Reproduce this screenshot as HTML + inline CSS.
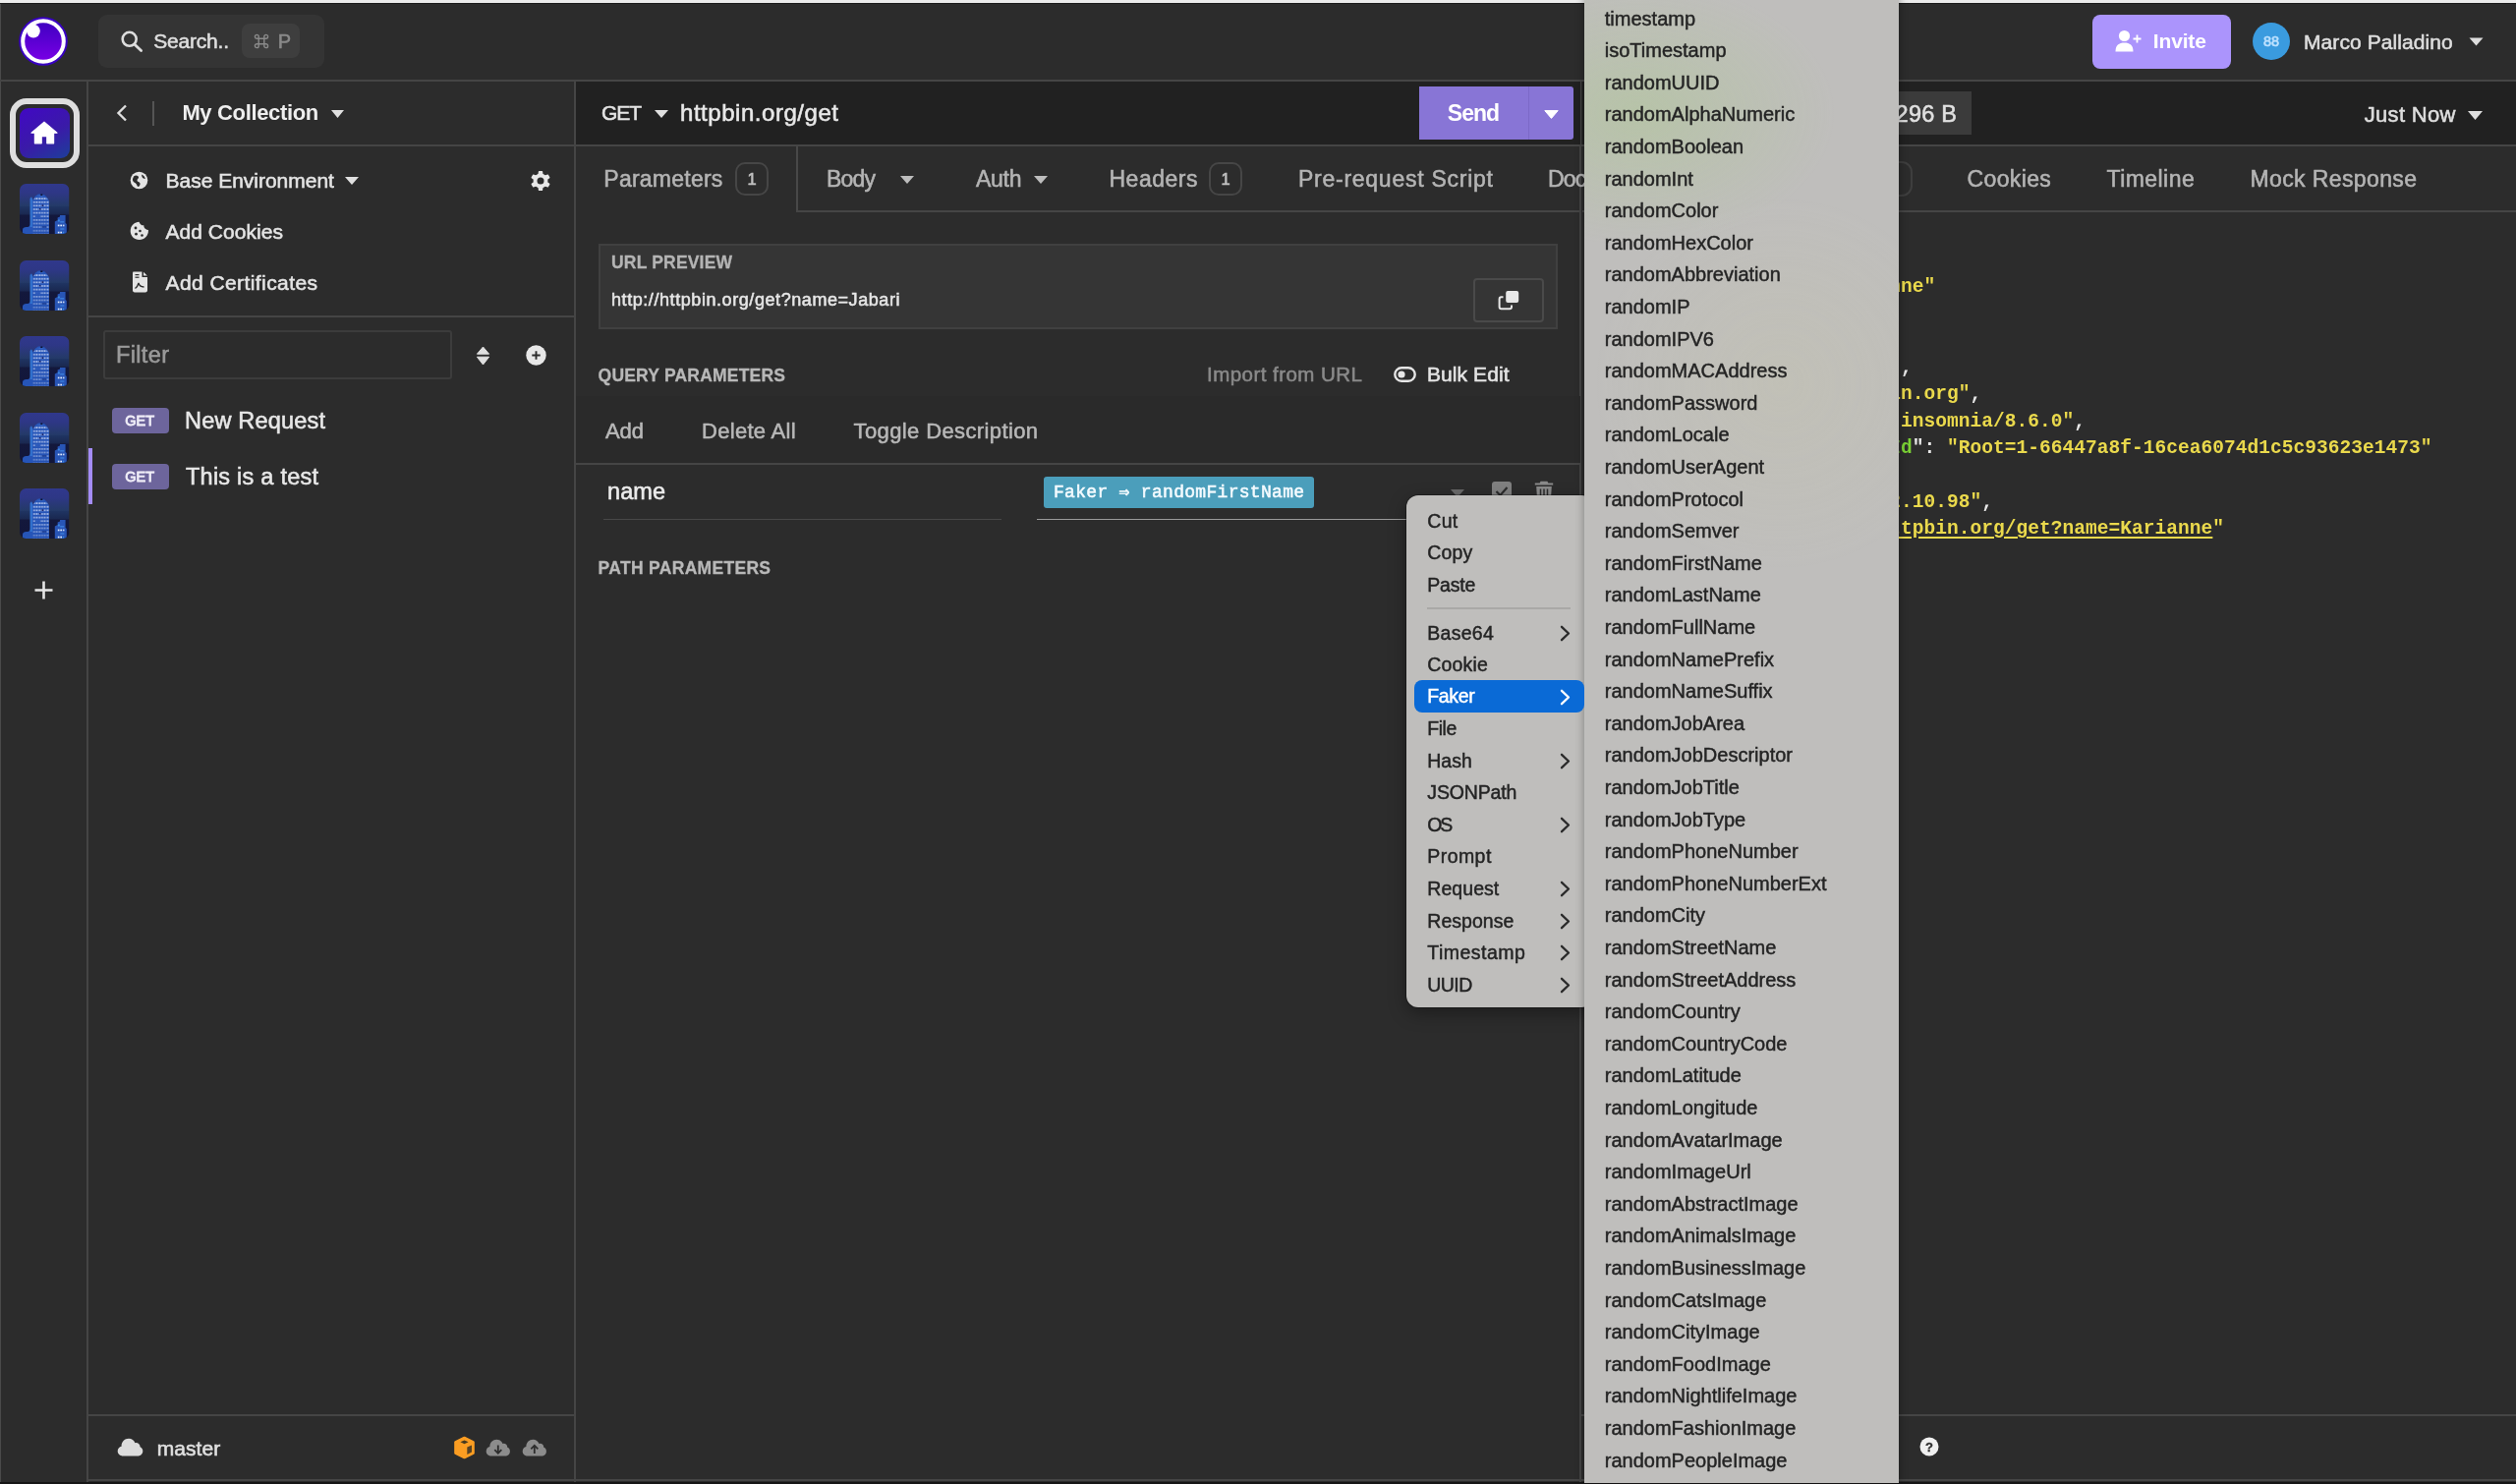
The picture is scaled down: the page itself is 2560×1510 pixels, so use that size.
<!DOCTYPE html>
<html><head><meta charset="utf-8"><title>Insomnia</title>
<style>
html,body{margin:0;padding:0;}
body{width:2560px;height:1510px;overflow:hidden;background:#2c2c2c;position:relative;font-family:'Liberation Sans', sans-serif;}
#w{position:absolute;left:0;top:0;width:2560px;height:1510px;will-change:transform;}
.a{position:absolute;box-sizing:border-box;}
.t{position:absolute;white-space:pre;-webkit-text-stroke:0.55px currentColor;}
.n{-webkit-text-stroke:0;}
.b{-webkit-text-stroke:0.3px currentColor;}
.m{-webkit-text-stroke:0.45px currentColor;}
</style></head><body><div id="w">
<div class="a" style="left:0px;top:0px;width:2560px;height:3px;background:#ececec;"></div>
<div class="a" style="left:0px;top:3px;width:2560px;height:1px;background:#1c1c1c;"></div>
<div class="a" style="left:0px;top:4px;width:1px;height:1506px;background:#4a4a4a;"></div>
<div class="a" style="left:0px;top:1508px;width:2560px;height:2px;background:#161616;"></div>
<div class="a" style="left:0px;top:81px;width:2560px;height:2px;background:#454545;"></div>
<div class="a" style="left:88px;top:82px;width:2px;height:1426px;background:#454545;"></div>
<div class="a" style="left:584px;top:82px;width:2px;height:1426px;background:#454545;"></div>
<div class="a" style="left:1607px;top:82px;width:2px;height:1426px;background:#454545;"></div>
<div class="a" style="left:89px;top:147px;width:495px;height:2px;background:#454545;"></div>
<div class="a" style="left:89px;top:321px;width:495px;height:2px;background:#454545;"></div>
<div class="a" style="left:89px;top:1439px;width:495px;height:2px;background:#454545;"></div>
<div class="a" style="left:89px;top:1505px;width:2471px;height:2px;background:#454545;"></div>
<div class="a" style="left:586px;top:83px;width:1022px;height:65px;background:#212121;"></div>
<div class="a" style="left:1610px;top:83px;width:950px;height:65px;background:#212121;"></div>
<div class="a" style="left:586px;top:147px;width:1974px;height:2px;background:#454545;"></div>
<div class="a" style="left:810px;top:149px;width:2px;height:67px;background:#484848;"></div>
<div class="a" style="left:810px;top:214px;width:798px;height:2px;background:#454545;"></div>
<div class="a" style="left:1610px;top:214px;width:950px;height:2px;background:#454545;"></div>
<div class="a" style="left:1609px;top:1439px;width:951px;height:2px;background:#454545;"></div>
<div class="a" style="left:586px;top:403px;width:1022px;height:69px;background:#2a2a2a;"></div>
<div class="a" style="left:586px;top:471px;width:1022px;height:2px;background:#454545;"></div>
<div class="a" style="left:100px;top:15px;width:230px;height:54px;background:#343434;border-radius:9px;"></div>
<div class="a" style="left:246px;top:24px;width:59px;height:35px;background:#3e3e3e;border-radius:8px;"></div>
<div class="a" style="left:2129px;top:15px;width:141px;height:55px;background:#ab94fc;border-radius:8px;"></div>
<div class="a" style="left:2292px;top:23px;width:38px;height:38px;background:#3a9bdf;border-radius:50%;"></div>
<div class="a" style="left:10px;top:100px;width:71px;height:71px;border:6px solid #dedede;border-radius:17px;"></div>
<div class="a" style="left:20px;top:110px;width:51px;height:51px;border-radius:9px;background:linear-gradient(150deg,#4108c4 0%,#3a1aa8 55%,#1d3f9a 100%);"></div>
<div class="a" style="left:155px;top:103px;width:2px;height:25px;background:#555555;"></div>
<div class="a" style="left:105px;top:336px;width:355px;height:50px;border:2px solid #3c3c3c;border-radius:3px;"></div>
<div class="a" style="left:114px;top:415px;width:58px;height:26px;background:#6d659c;border-radius:4px;"></div>
<div class="a" style="left:90px;top:456px;width:4px;height:57px;background:#a48cf8;"></div>
<div class="a" style="left:114px;top:472px;width:58px;height:26px;background:#6d659c;border-radius:4px;"></div>
<div class="a" style="left:1444px;top:88px;width:157px;height:54px;background:#8875d6;border-radius:0 3px 3px 0;"></div>
<div class="a" style="left:1555px;top:88px;width:1px;height:54px;background:#7c69c8;"></div>
<div class="a" style="left:748px;top:165px;width:34px;height:34px;border:2px solid #464646;border-radius:10px;"></div>
<div class="a" style="left:1230px;top:165px;width:34px;height:34px;border:2px solid #464646;border-radius:10px;"></div>
<div class="a" style="left:609px;top:248px;width:976px;height:87px;background:#353535;border:2px solid #404040;"></div>
<div class="a" style="left:1499px;top:283px;width:72px;height:45px;border:2px solid #4a4a4a;border-radius:4px;"></div>
<div class="a" style="left:614px;top:528px;width:405px;height:1px;background:#484848;"></div>
<div class="a" style="left:1055px;top:528px;width:553px;height:1px;background:#9a9a9a;"></div>
<div class="a" style="left:1062px;top:485px;width:275px;height:32px;background:#4b9ebb;border-radius:3px;"></div>
<div class="a" style="left:1517.5px;top:490px;width:20.5px;height:20px;background:#808080;border-radius:3px;"></div>
<div class="a" style="left:1880px;top:93px;width:126px;height:44px;background:#3b3b3b;"></div>
<div class="a" style="left:1880px;top:164px;width:66px;height:36px;border:2px solid #3e3e3e;border-radius:11px;"></div>
<div class="a" style="left:1431px;top:504px;width:190px;height:521px;background:#bfbebc;z-index:10;border-radius:12px;box-shadow:0 0 0 1px rgba(0,0,0,0.3),0 6px 18px rgba(0,0,0,0.35);"></div>
<div class="a" style="left:1611.5px;top:-10px;width:320.5px;height:1518.5px;z-index:10;box-shadow:0 0 8px 1px rgba(0,0,0,0.28);background:radial-gradient(ellipse 200px 135px at 55px 125px,rgba(168,204,132,0.36),rgba(168,204,132,0) 100%),radial-gradient(ellipse 190px 190px at 200px 400px,rgba(205,205,150,0.14),rgba(205,205,150,0) 100%),#bfbebc;"></div>
<div class="a" style="left:1452px;top:617.5px;width:146px;height:2px;background:#a9a8a6;z-index:10;"></div>
<div class="a" style="left:1439px;top:692px;width:172.5px;height:32.5px;background:#0a6ad6;z-index:10;border-radius:8px;"></div>
<svg class="a" style="left:19px;top:17px;" width="50" height="50" viewBox="0 0 50 50"><defs><linearGradient id="lg" x1="0" y1="0" x2="0" y2="1"><stop offset="0" stop-color="#3d00c0"/><stop offset="1" stop-color="#7a00e6"/></linearGradient></defs>
<circle cx="25" cy="25" r="24.8" fill="#3900c2"/><circle cx="25" cy="25" r="20.8" fill="url(#lg)" stroke="#fff" stroke-width="4"/><circle cx="15" cy="14.6" r="6.8" fill="#fff"/></svg>
<svg class="a" style="left:120px;top:28px;" width="28" height="28" viewBox="0 0 28 28"><circle cx="11.7" cy="11.8" r="7" fill="none" stroke="#dddddd" stroke-width="2.6"/><path d="M17 17.2 L23.6 23.6" stroke="#dddddd" stroke-width="2.8" stroke-linecap="round"/></svg>
<svg class="a" style="left:258px;top:34px;" width="16" height="16" viewBox="0 0 16 16"><path d="M5.2 5.2H10.8V10.8H5.2Z M5.2 5.2V3.3A1.9 1.9 0 1 0 3.3 5.2Z M10.8 5.2H12.7A1.9 1.9 0 1 0 10.8 3.3Z M10.8 10.8V12.7A1.9 1.9 0 1 0 12.7 10.8Z M5.2 10.8H3.3A1.9 1.9 0 1 0 5.2 12.7Z" fill="none" stroke="#8a8a8a" stroke-width="1.4"/></svg>
<svg class="a" style="left:2152px;top:29px;" width="28" height="26" viewBox="0 0 28 26"><circle cx="9.5" cy="7.5" r="5.6" fill="#fff"/><path d="M0.5 23.5 C0.5 17 4 14.5 9.5 14.5 C15 14.5 18.5 17 18.5 23.5 Z" fill="#fff"/><path d="M22.5 6.5V14.5M18.5 10.5H26.5" stroke="#fff" stroke-width="1.8"/></svg>
<svg class="a" style="left:2512px;top:38px;" width="15" height="9" viewBox="0 0 15 9"><path d="M0.5 0.5H14.5L7.5 8.5Z" fill="#dedede"/></svg>
<svg class="a" style="left:31px;top:123px;" width="28" height="24" viewBox="0 0 28 24"><path d="M14 1.2 L27 12.2 H23.6 V22.8 H16.8 V15.6 H11.2 V22.8 H4.4 V12.2 H1 Z" fill="#fff" stroke="#fff" stroke-width="1.2" stroke-linejoin="round"/></svg>
<svg class="a" style="left:20px;top:187.3px;" width="51" height="51" viewBox="0 0 51 51"><defs><linearGradient id="og0" x1="0" y1="0" x2="0" y2="1"><stop offset="0" stop-color="#30388c"/><stop offset="0.18" stop-color="#2e3786"/><stop offset="0.44" stop-color="#243a68"/><stop offset="0.455" stop-color="#1f3462"/><stop offset="0.61" stop-color="#1a2850"/><stop offset="0.625" stop-color="#13183c"/><stop offset="1" stop-color="#12163a"/></linearGradient>
<linearGradient id="fd0" x1="0" y1="0" x2="0" y2="1"><stop offset="0" stop-color="#2450b0" stop-opacity="0"/><stop offset="0.45" stop-color="#2450b0" stop-opacity="0.1"/><stop offset="1" stop-color="#2450b0" stop-opacity="0.55"/></linearGradient>
<pattern id="win0" x="13.55" y="13.25" width="2.7" height="3.63" patternUnits="userSpaceOnUse"><rect width="2.7" height="3.63" fill="#2655b8"/><rect x="0.45" y="1.05" width="1.75" height="1.6" fill="#c2d0f2"/></pattern></defs>
<clipPath id="cp0"><rect width="50.5" height="51" rx="6.5"/></clipPath><g clip-path="url(#cp0)"><rect width="50.5" height="51" fill="url(#og0)"/>
<path d="M3 51 V47 C3 44.5 5.5 43.5 8 44 C9.8 44 10.6 42.5 10.6 41 V15 L12 13.2 L13.6 16.5 L16 12.5 L19 10.6 H22.5 L25.5 11.6 L28 14 L30 17.5 V51 Z" fill="#2655b8"/>
<path d="M10.6 15 L12 13.2 L13 15.5 V44 H10.6 Z" fill="#3a86de" opacity="0.55"/>
<path d="M13.6 17.2 L16 13.6 L19 12.6 H24 L27.5 14.6 L30 17.8 V51 H13.6 Z" fill="url(#win0)"/>
<rect x="13.6" y="12" width="16.4" height="39" fill="url(#fd0)"/>
<rect x="21.3" y="10.4" width="2" height="1.6" fill="#0f1230"/>
<rect x="22.6" y="21.3" width="1.6" height="1.6" fill="#101a60"/><rect x="19.9" y="25" width="1.6" height="1.6" fill="#14256e"/><rect x="16" y="32.2" width="5" height="1.7" fill="#2655b8"/><rect x="22.6" y="43.1" width="4.6" height="1.7" fill="#1c3f96"/>
<path d="M35.8 51 V38.6 L38.6 37 V34.6 L41 33.4 V32 H46.6 V40 L47.8 41 V51 Z" fill="#2855b6"/>
<rect x="39" y="36.5" width="1.8" height="2" fill="#3a8ae0"/><rect x="41.2" y="38" width="4" height="1.6" fill="#3a7ad8"/>
<rect x="38.8" y="41.6" width="1.7" height="1.7" fill="#dfe8fb"/><rect x="41.3" y="41.6" width="1.7" height="1.7" fill="#dfe8fb"/><rect x="43.8" y="41.6" width="1.7" height="1.7" fill="#c8d6f5"/>
<rect x="41.3" y="45.2" width="4" height="1.6" fill="#3a7ad8"/>
<rect x="38.8" y="48.7" width="1.7" height="1.7" fill="#dfe8fb"/><rect x="41.3" y="48.7" width="1.7" height="1.7" fill="#dfe8fb"/><rect x="43.8" y="48.7" width="1.4" height="1.7" fill="#3a8ae0"/></g></svg>
<svg class="a" style="left:20px;top:264.8px;" width="51" height="51" viewBox="0 0 51 51"><defs><linearGradient id="og1" x1="0" y1="0" x2="0" y2="1"><stop offset="0" stop-color="#30388c"/><stop offset="0.18" stop-color="#2e3786"/><stop offset="0.44" stop-color="#243a68"/><stop offset="0.455" stop-color="#1f3462"/><stop offset="0.61" stop-color="#1a2850"/><stop offset="0.625" stop-color="#13183c"/><stop offset="1" stop-color="#12163a"/></linearGradient>
<linearGradient id="fd1" x1="0" y1="0" x2="0" y2="1"><stop offset="0" stop-color="#2450b0" stop-opacity="0"/><stop offset="0.45" stop-color="#2450b0" stop-opacity="0.1"/><stop offset="1" stop-color="#2450b0" stop-opacity="0.55"/></linearGradient>
<pattern id="win1" x="13.55" y="13.25" width="2.7" height="3.63" patternUnits="userSpaceOnUse"><rect width="2.7" height="3.63" fill="#2655b8"/><rect x="0.45" y="1.05" width="1.75" height="1.6" fill="#c2d0f2"/></pattern></defs>
<clipPath id="cp1"><rect width="50.5" height="51" rx="6.5"/></clipPath><g clip-path="url(#cp1)"><rect width="50.5" height="51" fill="url(#og1)"/>
<path d="M3 51 V47 C3 44.5 5.5 43.5 8 44 C9.8 44 10.6 42.5 10.6 41 V15 L12 13.2 L13.6 16.5 L16 12.5 L19 10.6 H22.5 L25.5 11.6 L28 14 L30 17.5 V51 Z" fill="#2655b8"/>
<path d="M10.6 15 L12 13.2 L13 15.5 V44 H10.6 Z" fill="#3a86de" opacity="0.55"/>
<path d="M13.6 17.2 L16 13.6 L19 12.6 H24 L27.5 14.6 L30 17.8 V51 H13.6 Z" fill="url(#win1)"/>
<rect x="13.6" y="12" width="16.4" height="39" fill="url(#fd1)"/>
<rect x="21.3" y="10.4" width="2" height="1.6" fill="#0f1230"/>
<rect x="22.6" y="21.3" width="1.6" height="1.6" fill="#101a60"/><rect x="19.9" y="25" width="1.6" height="1.6" fill="#14256e"/><rect x="16" y="32.2" width="5" height="1.7" fill="#2655b8"/><rect x="22.6" y="43.1" width="4.6" height="1.7" fill="#1c3f96"/>
<path d="M35.8 51 V38.6 L38.6 37 V34.6 L41 33.4 V32 H46.6 V40 L47.8 41 V51 Z" fill="#2855b6"/>
<rect x="39" y="36.5" width="1.8" height="2" fill="#3a8ae0"/><rect x="41.2" y="38" width="4" height="1.6" fill="#3a7ad8"/>
<rect x="38.8" y="41.6" width="1.7" height="1.7" fill="#dfe8fb"/><rect x="41.3" y="41.6" width="1.7" height="1.7" fill="#dfe8fb"/><rect x="43.8" y="41.6" width="1.7" height="1.7" fill="#c8d6f5"/>
<rect x="41.3" y="45.2" width="4" height="1.6" fill="#3a7ad8"/>
<rect x="38.8" y="48.7" width="1.7" height="1.7" fill="#dfe8fb"/><rect x="41.3" y="48.7" width="1.7" height="1.7" fill="#dfe8fb"/><rect x="43.8" y="48.7" width="1.4" height="1.7" fill="#3a8ae0"/></g></svg>
<svg class="a" style="left:20px;top:342.3px;" width="51" height="51" viewBox="0 0 51 51"><defs><linearGradient id="og2" x1="0" y1="0" x2="0" y2="1"><stop offset="0" stop-color="#30388c"/><stop offset="0.18" stop-color="#2e3786"/><stop offset="0.44" stop-color="#243a68"/><stop offset="0.455" stop-color="#1f3462"/><stop offset="0.61" stop-color="#1a2850"/><stop offset="0.625" stop-color="#13183c"/><stop offset="1" stop-color="#12163a"/></linearGradient>
<linearGradient id="fd2" x1="0" y1="0" x2="0" y2="1"><stop offset="0" stop-color="#2450b0" stop-opacity="0"/><stop offset="0.45" stop-color="#2450b0" stop-opacity="0.1"/><stop offset="1" stop-color="#2450b0" stop-opacity="0.55"/></linearGradient>
<pattern id="win2" x="13.55" y="13.25" width="2.7" height="3.63" patternUnits="userSpaceOnUse"><rect width="2.7" height="3.63" fill="#2655b8"/><rect x="0.45" y="1.05" width="1.75" height="1.6" fill="#c2d0f2"/></pattern></defs>
<clipPath id="cp2"><rect width="50.5" height="51" rx="6.5"/></clipPath><g clip-path="url(#cp2)"><rect width="50.5" height="51" fill="url(#og2)"/>
<path d="M3 51 V47 C3 44.5 5.5 43.5 8 44 C9.8 44 10.6 42.5 10.6 41 V15 L12 13.2 L13.6 16.5 L16 12.5 L19 10.6 H22.5 L25.5 11.6 L28 14 L30 17.5 V51 Z" fill="#2655b8"/>
<path d="M10.6 15 L12 13.2 L13 15.5 V44 H10.6 Z" fill="#3a86de" opacity="0.55"/>
<path d="M13.6 17.2 L16 13.6 L19 12.6 H24 L27.5 14.6 L30 17.8 V51 H13.6 Z" fill="url(#win2)"/>
<rect x="13.6" y="12" width="16.4" height="39" fill="url(#fd2)"/>
<rect x="21.3" y="10.4" width="2" height="1.6" fill="#0f1230"/>
<rect x="22.6" y="21.3" width="1.6" height="1.6" fill="#101a60"/><rect x="19.9" y="25" width="1.6" height="1.6" fill="#14256e"/><rect x="16" y="32.2" width="5" height="1.7" fill="#2655b8"/><rect x="22.6" y="43.1" width="4.6" height="1.7" fill="#1c3f96"/>
<path d="M35.8 51 V38.6 L38.6 37 V34.6 L41 33.4 V32 H46.6 V40 L47.8 41 V51 Z" fill="#2855b6"/>
<rect x="39" y="36.5" width="1.8" height="2" fill="#3a8ae0"/><rect x="41.2" y="38" width="4" height="1.6" fill="#3a7ad8"/>
<rect x="38.8" y="41.6" width="1.7" height="1.7" fill="#dfe8fb"/><rect x="41.3" y="41.6" width="1.7" height="1.7" fill="#dfe8fb"/><rect x="43.8" y="41.6" width="1.7" height="1.7" fill="#c8d6f5"/>
<rect x="41.3" y="45.2" width="4" height="1.6" fill="#3a7ad8"/>
<rect x="38.8" y="48.7" width="1.7" height="1.7" fill="#dfe8fb"/><rect x="41.3" y="48.7" width="1.7" height="1.7" fill="#dfe8fb"/><rect x="43.8" y="48.7" width="1.4" height="1.7" fill="#3a8ae0"/></g></svg>
<svg class="a" style="left:20px;top:419.8px;" width="51" height="51" viewBox="0 0 51 51"><defs><linearGradient id="og3" x1="0" y1="0" x2="0" y2="1"><stop offset="0" stop-color="#30388c"/><stop offset="0.18" stop-color="#2e3786"/><stop offset="0.44" stop-color="#243a68"/><stop offset="0.455" stop-color="#1f3462"/><stop offset="0.61" stop-color="#1a2850"/><stop offset="0.625" stop-color="#13183c"/><stop offset="1" stop-color="#12163a"/></linearGradient>
<linearGradient id="fd3" x1="0" y1="0" x2="0" y2="1"><stop offset="0" stop-color="#2450b0" stop-opacity="0"/><stop offset="0.45" stop-color="#2450b0" stop-opacity="0.1"/><stop offset="1" stop-color="#2450b0" stop-opacity="0.55"/></linearGradient>
<pattern id="win3" x="13.55" y="13.25" width="2.7" height="3.63" patternUnits="userSpaceOnUse"><rect width="2.7" height="3.63" fill="#2655b8"/><rect x="0.45" y="1.05" width="1.75" height="1.6" fill="#c2d0f2"/></pattern></defs>
<clipPath id="cp3"><rect width="50.5" height="51" rx="6.5"/></clipPath><g clip-path="url(#cp3)"><rect width="50.5" height="51" fill="url(#og3)"/>
<path d="M3 51 V47 C3 44.5 5.5 43.5 8 44 C9.8 44 10.6 42.5 10.6 41 V15 L12 13.2 L13.6 16.5 L16 12.5 L19 10.6 H22.5 L25.5 11.6 L28 14 L30 17.5 V51 Z" fill="#2655b8"/>
<path d="M10.6 15 L12 13.2 L13 15.5 V44 H10.6 Z" fill="#3a86de" opacity="0.55"/>
<path d="M13.6 17.2 L16 13.6 L19 12.6 H24 L27.5 14.6 L30 17.8 V51 H13.6 Z" fill="url(#win3)"/>
<rect x="13.6" y="12" width="16.4" height="39" fill="url(#fd3)"/>
<rect x="21.3" y="10.4" width="2" height="1.6" fill="#0f1230"/>
<rect x="22.6" y="21.3" width="1.6" height="1.6" fill="#101a60"/><rect x="19.9" y="25" width="1.6" height="1.6" fill="#14256e"/><rect x="16" y="32.2" width="5" height="1.7" fill="#2655b8"/><rect x="22.6" y="43.1" width="4.6" height="1.7" fill="#1c3f96"/>
<path d="M35.8 51 V38.6 L38.6 37 V34.6 L41 33.4 V32 H46.6 V40 L47.8 41 V51 Z" fill="#2855b6"/>
<rect x="39" y="36.5" width="1.8" height="2" fill="#3a8ae0"/><rect x="41.2" y="38" width="4" height="1.6" fill="#3a7ad8"/>
<rect x="38.8" y="41.6" width="1.7" height="1.7" fill="#dfe8fb"/><rect x="41.3" y="41.6" width="1.7" height="1.7" fill="#dfe8fb"/><rect x="43.8" y="41.6" width="1.7" height="1.7" fill="#c8d6f5"/>
<rect x="41.3" y="45.2" width="4" height="1.6" fill="#3a7ad8"/>
<rect x="38.8" y="48.7" width="1.7" height="1.7" fill="#dfe8fb"/><rect x="41.3" y="48.7" width="1.7" height="1.7" fill="#dfe8fb"/><rect x="43.8" y="48.7" width="1.4" height="1.7" fill="#3a8ae0"/></g></svg>
<svg class="a" style="left:20px;top:497.3px;" width="51" height="51" viewBox="0 0 51 51"><defs><linearGradient id="og4" x1="0" y1="0" x2="0" y2="1"><stop offset="0" stop-color="#30388c"/><stop offset="0.18" stop-color="#2e3786"/><stop offset="0.44" stop-color="#243a68"/><stop offset="0.455" stop-color="#1f3462"/><stop offset="0.61" stop-color="#1a2850"/><stop offset="0.625" stop-color="#13183c"/><stop offset="1" stop-color="#12163a"/></linearGradient>
<linearGradient id="fd4" x1="0" y1="0" x2="0" y2="1"><stop offset="0" stop-color="#2450b0" stop-opacity="0"/><stop offset="0.45" stop-color="#2450b0" stop-opacity="0.1"/><stop offset="1" stop-color="#2450b0" stop-opacity="0.55"/></linearGradient>
<pattern id="win4" x="13.55" y="13.25" width="2.7" height="3.63" patternUnits="userSpaceOnUse"><rect width="2.7" height="3.63" fill="#2655b8"/><rect x="0.45" y="1.05" width="1.75" height="1.6" fill="#c2d0f2"/></pattern></defs>
<clipPath id="cp4"><rect width="50.5" height="51" rx="6.5"/></clipPath><g clip-path="url(#cp4)"><rect width="50.5" height="51" fill="url(#og4)"/>
<path d="M3 51 V47 C3 44.5 5.5 43.5 8 44 C9.8 44 10.6 42.5 10.6 41 V15 L12 13.2 L13.6 16.5 L16 12.5 L19 10.6 H22.5 L25.5 11.6 L28 14 L30 17.5 V51 Z" fill="#2655b8"/>
<path d="M10.6 15 L12 13.2 L13 15.5 V44 H10.6 Z" fill="#3a86de" opacity="0.55"/>
<path d="M13.6 17.2 L16 13.6 L19 12.6 H24 L27.5 14.6 L30 17.8 V51 H13.6 Z" fill="url(#win4)"/>
<rect x="13.6" y="12" width="16.4" height="39" fill="url(#fd4)"/>
<rect x="21.3" y="10.4" width="2" height="1.6" fill="#0f1230"/>
<rect x="22.6" y="21.3" width="1.6" height="1.6" fill="#101a60"/><rect x="19.9" y="25" width="1.6" height="1.6" fill="#14256e"/><rect x="16" y="32.2" width="5" height="1.7" fill="#2655b8"/><rect x="22.6" y="43.1" width="4.6" height="1.7" fill="#1c3f96"/>
<path d="M35.8 51 V38.6 L38.6 37 V34.6 L41 33.4 V32 H46.6 V40 L47.8 41 V51 Z" fill="#2855b6"/>
<rect x="39" y="36.5" width="1.8" height="2" fill="#3a8ae0"/><rect x="41.2" y="38" width="4" height="1.6" fill="#3a7ad8"/>
<rect x="38.8" y="41.6" width="1.7" height="1.7" fill="#dfe8fb"/><rect x="41.3" y="41.6" width="1.7" height="1.7" fill="#dfe8fb"/><rect x="43.8" y="41.6" width="1.7" height="1.7" fill="#c8d6f5"/>
<rect x="41.3" y="45.2" width="4" height="1.6" fill="#3a7ad8"/>
<rect x="38.8" y="48.7" width="1.7" height="1.7" fill="#dfe8fb"/><rect x="41.3" y="48.7" width="1.7" height="1.7" fill="#dfe8fb"/><rect x="43.8" y="48.7" width="1.4" height="1.7" fill="#3a8ae0"/></g></svg>
<svg class="a" style="left:34px;top:590px;" width="21" height="21" viewBox="0 0 21 21"><path d="M10.5 1.5V19.5M1.5 10.5H19.5" stroke="#e6e6e6" stroke-width="2.6"/></svg>
<svg class="a" style="left:118px;top:106px;" width="12" height="18" viewBox="0 0 12 18"><path d="M10 1.5 L2.5 9 L10 16.5" fill="none" stroke="#dddddd" stroke-width="2.4"/></svg>
<svg class="a" style="left:337px;top:112px;" width="13" height="8" viewBox="0 0 13 8"><path d="M0 0H13L6.5 8Z" fill="#e0e0e0"/></svg>
<svg class="a" style="left:132px;top:174px;" width="19" height="19" viewBox="0 0 19 19"><circle cx="9.5" cy="9.5" r="8.8" fill="#e4e4e4"/><path d="M4 5.5 C6 3.5 8.5 4.5 9 6 C9.5 7.5 7.5 8 7.5 9.5 C7.5 11 10 11 10.5 12.5 C11 14 9.5 16 8.5 16 C7.5 16 7.5 13.5 6 12.5 C4.5 11.5 2.5 10.5 3 8 Z M12 3.5 C14 4 15.5 6 15.8 8 C14.5 8 13 7 12.5 6 Z" fill="#2c2c2c"/></svg>
<svg class="a" style="left:351px;top:180px;" width="14" height="8" viewBox="0 0 14 8"><path d="M0 0H14L7 8Z" fill="#e0e0e0"/></svg>
<svg class="a" style="left:539.2px;top:172.8px;" width="22" height="22" viewBox="0 0 22 22"><path d="M9.13 4.36 L9.53 1.72 L12.47 1.72 L12.87 4.36 L15.81 6.06 L18.31 5.08 L19.78 7.63 L17.69 9.30 L17.69 12.70 L19.78 14.37 L18.31 16.92 L15.81 15.94 L12.87 17.64 L12.47 20.28 L9.53 20.28 L9.13 17.64 L6.19 15.94 L3.69 16.92 L2.22 14.37 L4.31 12.70 L4.31 9.30 L2.22 7.63 L3.69 5.08 L6.19 6.06Z" fill="#e8e8e8" stroke="#e8e8e8" stroke-width="1.3" stroke-linejoin="round"/><circle cx="11" cy="11" r="3.5" fill="#2c2c2c"/></svg>
<svg class="a" style="left:132px;top:225px;" width="20" height="20" viewBox="0 0 20 20"><path d="M9.5 0.7 C10.3 3.2 12.3 4.5 14.3 4.3 C14.3 7 16.2 8.8 18.9 8.9 C19.4 14.5 15.2 19 9.8 19 C4.6 19 0.7 15 0.7 10 C0.7 5 4.5 0.9 9.5 0.7 Z" fill="#e4e4e4"/><circle cx="6" cy="7" r="1.4" fill="#2c2c2c"/><circle cx="10.5" cy="10" r="1.3" fill="#2c2c2c"/><circle cx="6.5" cy="13.2" r="1.4" fill="#2c2c2c"/><circle cx="12.5" cy="14.5" r="1.3" fill="#2c2c2c"/></svg>
<svg class="a" style="left:134px;top:276px;" width="17" height="22" viewBox="0 0 17 22"><path d="M1.5 0.5 H10.5 V6 H16 V19.5 C16 20.6 15.2 21.4 14 21.4 H3 C1.8 21.4 1 20.6 1 19.5 V2 C1 1.2 1.5 0.5 1.5 0.5 Z M12 0.8 L15.8 4.6 H12 Z" fill="#e4e4e4"/><path d="M3.5 17.5 C5.5 16 6.5 14 7 12 C7.5 14.5 9.5 15.8 12.5 16" stroke="#2c2c2c" stroke-width="1.3" fill="none"/><rect x="3.5" y="3" width="4" height="1.2" fill="#2c2c2c"/><rect x="3.5" y="5.6" width="4" height="1.2" fill="#2c2c2c"/></svg>
<svg class="a" style="left:483.5px;top:351.8px;" width="15" height="20" viewBox="0 0 15 20"><path d="M7.5 1 L13.6 8.2 H1.4 Z M7.5 19 L13.6 11.2 H1.4 Z" fill="#e0e0e0" stroke="#e0e0e0" stroke-width="1" stroke-linejoin="round"/></svg>
<svg class="a" style="left:535px;top:351px;" width="21" height="21" viewBox="0 0 21 21"><circle cx="10.5" cy="10.5" r="10.2" fill="#e8e8e8"/><path d="M10.5 6.3V14.7M6.3 10.5H14.7" stroke="#2c2c2c" stroke-width="1.9"/></svg>
<svg class="a" style="left:118.8px;top:1463px;" width="27" height="19" viewBox="0 0 27 19"><path d="M6.5 18.5 C3 18.5 0.7 16.3 0.7 13.5 C0.7 11 2.4 9.2 4.6 8.7 C4.4 4.2 7.8 0.8 12 0.8 C15 0.8 17.4 2.6 18.4 5.2 C21 4.6 23.6 6.4 23.6 9.3 C25.3 10 26.3 11.6 26.3 13.5 C26.3 16.3 24.2 18.5 21 18.5 Z" fill="#dcdcdc"/></svg>
<svg class="a" style="left:461.4px;top:1461px;" width="23" height="24" viewBox="0 0 23 24"><path d="M11.5 2 L20.5 6.3 V17.6 L11.5 22 L2.5 17.6 V6.3 Z" fill="#fb9d22" stroke="#fb9d22" stroke-width="2.6" stroke-linejoin="round"/><path d="M11.5 4.4 L15.6 6.3 L11.5 8.2 L7.4 6.3 Z" fill="#33301f" opacity="0.9"/><path d="M14.3 11.6 L19 9.4 V16.6 L14.3 18.9 Z" fill="#3a3326" opacity="0.85"/></svg>
<svg class="a" style="left:493.6px;top:1463.6px;" width="26" height="19" viewBox="0 0 26 19"><path d="M6.2 17.5 C3 17.5 0.7 15.4 0.7 12.7 C0.7 10.3 2.3 8.6 4.4 8.1 C4.2 3.9 7.4 0.7 11.4 0.7 C14.2 0.7 16.5 2.4 17.4 4.9 C19.9 4.3 22.3 6 22.3 8.8 C24 9.4 24.9 10.9 24.9 12.7 C24.9 15.4 22.9 17.5 19.9 17.5 Z" fill="#8c8c8c"/><path d="M12.8 6.5V14.5M9.3 11.2L12.8 14.8L16.3 11.2" stroke="#2c2c2c" stroke-width="1.8" fill="none"/></svg>
<svg class="a" style="left:530.6px;top:1463.6px;" width="26" height="19" viewBox="0 0 26 19"><path d="M6.2 17.5 C3 17.5 0.7 15.4 0.7 12.7 C0.7 10.3 2.3 8.6 4.4 8.1 C4.2 3.9 7.4 0.7 11.4 0.7 C14.2 0.7 16.5 2.4 17.4 4.9 C19.9 4.3 22.3 6 22.3 8.8 C24 9.4 24.9 10.9 24.9 12.7 C24.9 15.4 22.9 17.5 19.9 17.5 Z" fill="#8c8c8c"/><path d="M12.8 15V7M9.3 10.3L12.8 6.7L16.3 10.3" stroke="#2c2c2c" stroke-width="1.8" fill="none"/></svg>
<svg class="a" style="left:666px;top:112px;" width="14" height="8" viewBox="0 0 14 8"><path d="M0 0H14L7 8Z" fill="#e0e0e0"/></svg>
<svg class="a" style="left:1570.5px;top:112.3px;" width="15" height="9" viewBox="0 0 15 9"><path d="M0.8 0.6H14.2L7.5 8.4Z" fill="#ffffff" stroke="#fff" stroke-width="1" stroke-linejoin="round"/></svg>
<svg class="a" style="left:916px;top:179px;" width="14" height="8" viewBox="0 0 14 8"><path d="M0 0H14L7 8Z" fill="#bdbdbd"/></svg>
<svg class="a" style="left:1052px;top:179px;" width="14" height="8" viewBox="0 0 14 8"><path d="M0 0H14L7 8Z" fill="#bdbdbd"/></svg>
<svg class="a" style="left:1524px;top:295px;" width="23" height="21" viewBox="0 0 23 21"><rect x="8.2" y="1" width="13" height="12" rx="2" fill="#e8e8e8"/><path d="M5.5 7.2 H3.6 C2.4 7.2 1.6 8 1.6 9.2 V17.2 C1.6 18.4 2.4 19.2 3.6 19.2 H12 C13.2 19.2 14 18.4 14 17.2 V15.5" fill="none" stroke="#e8e8e8" stroke-width="2"/></svg>
<svg class="a" style="left:1418px;top:372px;" width="23" height="18" viewBox="0 0 23 18"><rect x="1.3" y="2.3" width="20.4" height="13.4" rx="6.7" fill="none" stroke="#e6e6e6" stroke-width="2.4"/><circle cx="8" cy="9" r="3.6" fill="#e6e6e6"/></svg>
<svg class="a" style="left:1475.5px;top:497.5px;" width="14" height="8" viewBox="0 0 14 8"><path d="M0 0H14L7 8Z" fill="#6a6a6a"/></svg>
<svg class="a" style="left:1520.5px;top:494px;" width="14" height="12" viewBox="0 0 14 12"><path d="M1.5 6L5.5 10L12.5 2" fill="none" stroke="#2c2c2c" stroke-width="2.2"/></svg>
<svg class="a" style="left:1561px;top:488.5px;" width="20" height="22" viewBox="0 0 20 22"><path d="M6.5 0.8H13.5L14.3 2.4H19.2V4.6H0.8V2.4H5.7Z M2.2 6H17.8L16.8 21.2H3.2Z" fill="#8a8a8a"/><path d="M6.5 8.5V18.5M10 8.5V18.5M13.5 8.5V18.5" stroke="#2c2c2c" stroke-width="1.5"/></svg>
<svg class="a" style="left:2511px;top:113px;" width="15" height="9" viewBox="0 0 15 9"><path d="M0 0H15L7.5 9Z" fill="#dedede"/></svg>
<svg class="a" style="left:1953px;top:1462px;" width="20" height="20" viewBox="0 0 20 20"><circle cx="10" cy="10" r="9.5" fill="#f0f0f0"/></svg>
<svg class="a" style="left:1587px;top:635.7px;z-index:10;" width="11" height="17" viewBox="0 0 11 17"><path d="M2 1.8L9 8.5L2 15.2" fill="none" stroke="#2a2a2a" stroke-width="2.3" stroke-linecap="round" stroke-linejoin="round"/></svg>
<svg class="a" style="left:1587px;top:700.5px;z-index:10;" width="11" height="17" viewBox="0 0 11 17"><path d="M2 1.8L9 8.5L2 15.2" fill="none" stroke="#ffffff" stroke-width="2.3" stroke-linecap="round" stroke-linejoin="round"/></svg>
<svg class="a" style="left:1587px;top:765.7px;z-index:10;" width="11" height="17" viewBox="0 0 11 17"><path d="M2 1.8L9 8.5L2 15.2" fill="none" stroke="#2a2a2a" stroke-width="2.3" stroke-linecap="round" stroke-linejoin="round"/></svg>
<svg class="a" style="left:1587px;top:830.9px;z-index:10;" width="11" height="17" viewBox="0 0 11 17"><path d="M2 1.8L9 8.5L2 15.2" fill="none" stroke="#2a2a2a" stroke-width="2.3" stroke-linecap="round" stroke-linejoin="round"/></svg>
<svg class="a" style="left:1587px;top:896.1px;z-index:10;" width="11" height="17" viewBox="0 0 11 17"><path d="M2 1.8L9 8.5L2 15.2" fill="none" stroke="#2a2a2a" stroke-width="2.3" stroke-linecap="round" stroke-linejoin="round"/></svg>
<svg class="a" style="left:1587px;top:928.7px;z-index:10;" width="11" height="17" viewBox="0 0 11 17"><path d="M2 1.8L9 8.5L2 15.2" fill="none" stroke="#2a2a2a" stroke-width="2.3" stroke-linecap="round" stroke-linejoin="round"/></svg>
<svg class="a" style="left:1587px;top:961.3000000000001px;z-index:10;" width="11" height="17" viewBox="0 0 11 17"><path d="M2 1.8L9 8.5L2 15.2" fill="none" stroke="#2a2a2a" stroke-width="2.3" stroke-linecap="round" stroke-linejoin="round"/></svg>
<svg class="a" style="left:1587px;top:993.9px;z-index:10;" width="11" height="17" viewBox="0 0 11 17"><path d="M2 1.8L9 8.5L2 15.2" fill="none" stroke="#2a2a2a" stroke-width="2.3" stroke-linecap="round" stroke-linejoin="round"/></svg>
<span class="t" style="left:156.3px;top:31.0px;font-size:21px;line-height:21px;color:#dedede;letter-spacing:-0.22px;">Search..</span>
<span class="t" style="left:282.7px;top:31.5px;font-size:20px;line-height:20px;color:#8a8a8a;">P</span>
<span class="t n" style="left:2190.8px;top:30.5px;font-size:21px;line-height:21px;color:#ffffff;font-weight:700;letter-spacing:-0.15px;">Invite</span>
<span class="t" style="left:2303.0px;top:34.8px;font-size:14.5px;line-height:14.5px;color:#bfe2ff;letter-spacing:0.06px;">88</span>
<span class="t" style="left:2344.0px;top:31.5px;font-size:21px;line-height:21px;color:#dedede;letter-spacing:0.08px;">Marco Palladino</span>
<span class="t n" style="left:185.4px;top:103.6px;font-size:22px;line-height:22px;color:#eeeeee;font-weight:700;letter-spacing:-0.35px;">My Collection</span>
<span class="t" style="left:168.5px;top:172.5px;font-size:21px;line-height:21px;color:#e4e4e4;letter-spacing:-0.01px;">Base Environment</span>
<span class="t" style="left:168.5px;top:224.5px;font-size:21px;line-height:21px;color:#e4e4e4;letter-spacing:0.04px;">Add Cookies</span>
<span class="t" style="left:168.5px;top:276.5px;font-size:21px;line-height:21px;color:#e4e4e4;letter-spacing:0.42px;">Add Certificates</span>
<span class="t" style="left:118.0px;top:349.9px;font-size:23.5px;line-height:23.5px;color:#9a9a9a;letter-spacing:0.35px;">Filter</span>
<span class="t" style="left:127.3px;top:421.1px;font-size:14.5px;line-height:14.5px;color:#f0eef8;letter-spacing:-0.06px;-webkit-text-stroke:0.8px #f0eef8;">GET</span>
<span class="t" style="left:188.0px;top:417.2px;font-size:23.5px;line-height:23.5px;color:#e8e8e8;letter-spacing:0.19px;">New Request</span>
<span class="t" style="left:127.3px;top:478.1px;font-size:14.5px;line-height:14.5px;color:#f0eef8;letter-spacing:-0.06px;-webkit-text-stroke:0.8px #f0eef8;">GET</span>
<span class="t" style="left:189.0px;top:474.2px;font-size:23.5px;line-height:23.5px;color:#e8e8e8;letter-spacing:0.24px;">This is a test</span>
<span class="t" style="left:159.8px;top:1463.1px;font-size:21px;line-height:21px;color:#e0e0e0;letter-spacing:0.04px;">master</span>
<span class="t" style="left:612.0px;top:104.2px;font-size:21px;line-height:21px;color:#e4e4e4;letter-spacing:-1.09px;">GET</span>
<span class="t" style="left:692.0px;top:103.0px;font-size:24px;line-height:24px;color:#e8e8e8;letter-spacing:0.54px;">httpbin.org/get</span>
<span class="t n" style="left:1472.8px;top:104.4px;font-size:23px;line-height:23px;color:#ffffff;font-weight:700;letter-spacing:-1.01px;">Send</span>
<span class="t" style="left:614.3px;top:170.8px;font-size:23px;line-height:23px;color:#b4b4b4;letter-spacing:0.24px;">Parameters</span>
<span class="t" style="left:760.5px;top:173.8px;font-size:16.5px;line-height:16.5px;color:#c0c0c0;">1</span>
<span class="t" style="left:841.0px;top:170.8px;font-size:23px;line-height:23px;color:#b4b4b4;letter-spacing:-0.81px;">Body</span>
<span class="t" style="left:993.0px;top:170.8px;font-size:23px;line-height:23px;color:#b4b4b4;letter-spacing:-0.28px;">Auth</span>
<span class="t" style="left:1128.5px;top:170.8px;font-size:23px;line-height:23px;color:#b4b4b4;letter-spacing:0.51px;">Headers</span>
<span class="t" style="left:1242.5px;top:173.8px;font-size:16.5px;line-height:16.5px;color:#c0c0c0;">1</span>
<span class="t" style="left:1321.0px;top:170.8px;font-size:23px;line-height:23px;color:#b4b4b4;letter-spacing:0.74px;">Pre-request Script</span>
<span class="t" style="left:1575.0px;top:170.8px;font-size:23px;line-height:23px;color:#b4b4b4;letter-spacing:-0.80px;">Docs</span>
<span class="t b" style="left:622.0px;top:259.1px;font-size:17.5px;line-height:17.5px;color:#b4b4b4;font-weight:700;letter-spacing:0.18px;">URL PREVIEW</span>
<span class="t" style="left:622.0px;top:296.3px;font-size:18px;line-height:18px;color:#e6e6e6;letter-spacing:0.57px;">http://httpbin.org/get?name=Jabari</span>
<span class="t b" style="left:608.6px;top:374.1px;font-size:17.5px;line-height:17.5px;color:#b8b8b8;font-weight:700;letter-spacing:0.20px;">QUERY PARAMETERS</span>
<span class="t" style="left:1228.0px;top:371.4px;font-size:20.5px;line-height:20.5px;color:#8a8a8a;letter-spacing:0.46px;">Import from URL</span>
<span class="t" style="left:1452.0px;top:370.4px;font-size:21px;line-height:21px;color:#e4e4e4;letter-spacing:0.08px;">Bulk Edit</span>
<span class="t" style="left:616.0px;top:427.7px;font-size:22px;line-height:22px;color:#b8b8b8;letter-spacing:-0.08px;">Add</span>
<span class="t" style="left:714.0px;top:427.7px;font-size:22px;line-height:22px;color:#b8b8b8;letter-spacing:0.29px;">Delete All</span>
<span class="t" style="left:868.6px;top:427.7px;font-size:22px;line-height:22px;color:#b8b8b8;letter-spacing:0.38px;">Toggle Description</span>
<span class="t" style="left:618.0px;top:488.6px;font-size:23.5px;line-height:23.5px;color:#ececec;letter-spacing:0.07px;">name</span>
<span class="t" style="left:1072.0px;top:492.0px;font-size:18px;line-height:18px;color:#f4fbff;font-family:'Liberation Mono', monospace;letter-spacing:0.30px;">Faker ⇒ randomFirstName</span>
<span class="t b" style="left:608.6px;top:569.5px;font-size:17.5px;line-height:17.5px;color:#b8b8b8;font-weight:700;letter-spacing:0.31px;">PATH PARAMETERS</span>
<span class="t" style="left:1928.6px;top:104.8px;font-size:23.5px;line-height:23.5px;color:#e0e0e0;letter-spacing:0.24px;">296 B</span>
<span class="t" style="left:2405.7px;top:106.3px;font-size:22px;line-height:22px;color:#dedede;letter-spacing:0.32px;">Just Now</span>
<span class="t" style="left:2001.6px;top:170.8px;font-size:23px;line-height:23px;color:#b4b4b4;letter-spacing:0.35px;">Cookies</span>
<span class="t" style="left:2143.5px;top:170.8px;font-size:23px;line-height:23px;color:#b4b4b4;letter-spacing:0.45px;">Timeline</span>
<span class="t" style="left:2289.5px;top:170.8px;font-size:23px;line-height:23px;color:#b4b4b4;letter-spacing:0.38px;">Mock Response</span>
<span class="t b" style="left:1959.0px;top:1465.5px;font-size:13px;line-height:13px;color:#2c2c2c;font-weight:700;">?</span>
<span class="t n" style="left:1710.8px;top:228.5px;font-size:19.5px;line-height:19.5px;color:#e8e8e8;font-weight:700;font-family:'Liberation Mono', monospace;">{</span>
<span class="t n" style="left:1710.8px;top:255.8px;font-size:19.5px;line-height:19.5px;color:#e8e8e8;font-weight:700;font-family:'Liberation Mono', monospace;letter-spacing:0.07px;">  &quot;</span>
<span class="t n" style="left:1746.0px;top:255.8px;font-size:19.5px;line-height:19.5px;color:#7bd235;font-weight:700;font-family:'Liberation Mono', monospace;letter-spacing:0.06px;">args</span>
<span class="t n" style="left:1793.0px;top:255.8px;font-size:19.5px;line-height:19.5px;color:#e8e8e8;font-weight:700;font-family:'Liberation Mono', monospace;letter-spacing:0.06px;">&quot;: {</span>
<span class="t n" style="left:1710.8px;top:283.1px;font-size:19.5px;line-height:19.5px;color:#e8e8e8;font-weight:700;font-family:'Liberation Mono', monospace;letter-spacing:0.06px;">    &quot;</span>
<span class="t n" style="left:1769.5px;top:283.1px;font-size:19.5px;line-height:19.5px;color:#7bd235;font-weight:700;font-family:'Liberation Mono', monospace;letter-spacing:0.06px;">name</span>
<span class="t n" style="left:1816.5px;top:283.1px;font-size:19.5px;line-height:19.5px;color:#e8e8e8;font-weight:700;font-family:'Liberation Mono', monospace;letter-spacing:0.07px;">&quot;: </span>
<span class="t n" style="left:1851.8px;top:283.1px;font-size:19.5px;line-height:19.5px;color:#ead94c;font-weight:700;font-family:'Liberation Mono', monospace;letter-spacing:0.05px;">&quot;Karianne&quot;</span>
<span class="t n" style="left:1710.8px;top:310.4px;font-size:19.5px;line-height:19.5px;color:#e8e8e8;font-weight:700;font-family:'Liberation Mono', monospace;letter-spacing:0.06px;">  },</span>
<span class="t n" style="left:1710.8px;top:337.8px;font-size:19.5px;line-height:19.5px;color:#e8e8e8;font-weight:700;font-family:'Liberation Mono', monospace;letter-spacing:0.07px;">  &quot;</span>
<span class="t n" style="left:1746.0px;top:337.8px;font-size:19.5px;line-height:19.5px;color:#7bd235;font-weight:700;font-family:'Liberation Mono', monospace;letter-spacing:0.05px;">headers</span>
<span class="t n" style="left:1828.3px;top:337.8px;font-size:19.5px;line-height:19.5px;color:#e8e8e8;font-weight:700;font-family:'Liberation Mono', monospace;letter-spacing:0.06px;">&quot;: {</span>
<span class="t n" style="left:1710.8px;top:365.0px;font-size:19.5px;line-height:19.5px;color:#e8e8e8;font-weight:700;font-family:'Liberation Mono', monospace;letter-spacing:0.06px;">    &quot;</span>
<span class="t n" style="left:1769.5px;top:365.0px;font-size:19.5px;line-height:19.5px;color:#7bd235;font-weight:700;font-family:'Liberation Mono', monospace;letter-spacing:0.06px;">Accept</span>
<span class="t n" style="left:1840.0px;top:365.0px;font-size:19.5px;line-height:19.5px;color:#e8e8e8;font-weight:700;font-family:'Liberation Mono', monospace;letter-spacing:0.07px;">&quot;: </span>
<span class="t n" style="left:1875.3px;top:365.0px;font-size:19.5px;line-height:19.5px;color:#ead94c;font-weight:700;font-family:'Liberation Mono', monospace;letter-spacing:0.06px;">&quot;*/*&quot;</span>
<span class="t n" style="left:1934.0px;top:365.0px;font-size:19.5px;line-height:19.5px;color:#e8e8e8;font-weight:700;font-family:'Liberation Mono', monospace;">,</span>
<span class="t n" style="left:1710.8px;top:392.4px;font-size:19.5px;line-height:19.5px;color:#e8e8e8;font-weight:700;font-family:'Liberation Mono', monospace;letter-spacing:0.06px;">    &quot;</span>
<span class="t n" style="left:1769.5px;top:392.4px;font-size:19.5px;line-height:19.5px;color:#7bd235;font-weight:700;font-family:'Liberation Mono', monospace;letter-spacing:0.06px;">Host</span>
<span class="t n" style="left:1816.5px;top:392.4px;font-size:19.5px;line-height:19.5px;color:#e8e8e8;font-weight:700;font-family:'Liberation Mono', monospace;letter-spacing:0.07px;">&quot;: </span>
<span class="t n" style="left:1851.8px;top:392.4px;font-size:19.5px;line-height:19.5px;color:#ead94c;font-weight:700;font-family:'Liberation Mono', monospace;letter-spacing:0.05px;">&quot;httpbin.org&quot;</span>
<span class="t n" style="left:2004.5px;top:392.4px;font-size:19.5px;line-height:19.5px;color:#e8e8e8;font-weight:700;font-family:'Liberation Mono', monospace;">,</span>
<span class="t n" style="left:1710.8px;top:419.6px;font-size:19.5px;line-height:19.5px;color:#e8e8e8;font-weight:700;font-family:'Liberation Mono', monospace;letter-spacing:0.06px;">    &quot;</span>
<span class="t n" style="left:1769.5px;top:419.6px;font-size:19.5px;line-height:19.5px;color:#7bd235;font-weight:700;font-family:'Liberation Mono', monospace;letter-spacing:0.05px;">User-Agent</span>
<span class="t n" style="left:1887.0px;top:419.6px;font-size:19.5px;line-height:19.5px;color:#e8e8e8;font-weight:700;font-family:'Liberation Mono', monospace;letter-spacing:0.07px;">&quot;: </span>
<span class="t n" style="left:1922.3px;top:419.6px;font-size:19.5px;line-height:19.5px;color:#ead94c;font-weight:700;font-family:'Liberation Mono', monospace;letter-spacing:0.05px;">&quot;insomnia/8.6.0&quot;</span>
<span class="t n" style="left:2110.3px;top:419.6px;font-size:19.5px;line-height:19.5px;color:#e8e8e8;font-weight:700;font-family:'Liberation Mono', monospace;">,</span>
<span class="t n" style="left:1710.8px;top:446.9px;font-size:19.5px;line-height:19.5px;color:#e8e8e8;font-weight:700;font-family:'Liberation Mono', monospace;letter-spacing:0.06px;">    &quot;</span>
<span class="t n" style="left:1769.5px;top:446.9px;font-size:19.5px;line-height:19.5px;color:#7bd235;font-weight:700;font-family:'Liberation Mono', monospace;letter-spacing:0.05px;">X-Amzn-Trace-Id</span>
<span class="t n" style="left:1945.8px;top:446.9px;font-size:19.5px;line-height:19.5px;color:#e8e8e8;font-weight:700;font-family:'Liberation Mono', monospace;letter-spacing:0.07px;">&quot;: </span>
<span class="t n" style="left:1981.0px;top:446.9px;font-size:19.5px;line-height:19.5px;color:#ead94c;font-weight:700;font-family:'Liberation Mono', monospace;letter-spacing:0.05px;">&quot;Root=1-66447a8f-16cea6074d1c5c93623e1473&quot;</span>
<span class="t n" style="left:1710.8px;top:474.2px;font-size:19.5px;line-height:19.5px;color:#e8e8e8;font-weight:700;font-family:'Liberation Mono', monospace;letter-spacing:0.06px;">  },</span>
<span class="t n" style="left:1710.8px;top:501.5px;font-size:19.5px;line-height:19.5px;color:#e8e8e8;font-weight:700;font-family:'Liberation Mono', monospace;letter-spacing:0.07px;">  &quot;</span>
<span class="t n" style="left:1746.0px;top:501.5px;font-size:19.5px;line-height:19.5px;color:#7bd235;font-weight:700;font-family:'Liberation Mono', monospace;letter-spacing:0.06px;">origin</span>
<span class="t n" style="left:1816.5px;top:501.5px;font-size:19.5px;line-height:19.5px;color:#e8e8e8;font-weight:700;font-family:'Liberation Mono', monospace;letter-spacing:0.07px;">&quot;: </span>
<span class="t n" style="left:1851.8px;top:501.5px;font-size:19.5px;line-height:19.5px;color:#ead94c;font-weight:700;font-family:'Liberation Mono', monospace;letter-spacing:0.05px;">&quot;73.162.10.98&quot;</span>
<span class="t n" style="left:2016.3px;top:501.5px;font-size:19.5px;line-height:19.5px;color:#e8e8e8;font-weight:700;font-family:'Liberation Mono', monospace;">,</span>
<span class="t n" style="left:1710.8px;top:528.9px;font-size:19.5px;line-height:19.5px;color:#e8e8e8;font-weight:700;font-family:'Liberation Mono', monospace;letter-spacing:0.07px;">  &quot;</span>
<span class="t n" style="left:1746.0px;top:528.9px;font-size:19.5px;line-height:19.5px;color:#7bd235;font-weight:700;font-family:'Liberation Mono', monospace;letter-spacing:0.07px;">url</span>
<span class="t n" style="left:1781.3px;top:528.9px;font-size:19.5px;line-height:19.5px;color:#e8e8e8;font-weight:700;font-family:'Liberation Mono', monospace;letter-spacing:0.07px;">&quot;: </span>
<span class="t n" style="left:1816.5px;top:528.9px;font-size:19.5px;line-height:19.5px;color:#ead94c;font-weight:700;font-family:'Liberation Mono', monospace;">&quot;</span>
<span class="t n" style="left:1828.3px;top:528.9px;font-size:19.5px;line-height:19.5px;color:#ead94c;font-weight:700;font-family:'Liberation Mono', monospace;letter-spacing:0.05px;text-decoration:underline;text-decoration-thickness:2px;text-underline-offset:3px;">http://httpbin.org/get?name=Karianne</span>
<span class="t n" style="left:2251.3px;top:528.9px;font-size:19.5px;line-height:19.5px;color:#ead94c;font-weight:700;font-family:'Liberation Mono', monospace;">&quot;</span>
<span class="t n" style="left:1710.8px;top:556.1px;font-size:19.5px;line-height:19.5px;color:#e8e8e8;font-weight:700;font-family:'Liberation Mono', monospace;">}</span>
<span class="t m" style="left:1452.3px;top:520.6px;font-size:19.5px;line-height:19.5px;color:#242424;letter-spacing:0.32px;z-index:10;">Cut</span>
<span class="t m" style="left:1452.3px;top:553.1px;font-size:19.5px;line-height:19.5px;color:#242424;letter-spacing:0.16px;z-index:10;">Copy</span>
<span class="t m" style="left:1452.3px;top:585.6px;font-size:19.5px;line-height:19.5px;color:#242424;letter-spacing:-0.22px;z-index:10;">Paste</span>
<span class="t m" style="left:1452.3px;top:634.5px;font-size:19.5px;line-height:19.5px;color:#242424;letter-spacing:0.27px;z-index:10;">Base64</span>
<span class="t m" style="left:1452.3px;top:666.9px;font-size:19.5px;line-height:19.5px;color:#242424;letter-spacing:0.16px;z-index:10;">Cookie</span>
<span class="t m" style="left:1452.3px;top:699.2px;font-size:19.5px;line-height:19.5px;color:#ffffff;letter-spacing:-0.34px;z-index:10;">Faker</span>
<span class="t m" style="left:1452.3px;top:731.9px;font-size:19.5px;line-height:19.5px;color:#242424;letter-spacing:-0.47px;z-index:10;">File</span>
<span class="t m" style="left:1452.3px;top:764.5px;font-size:19.5px;line-height:19.5px;color:#242424;letter-spacing:-0.01px;z-index:10;">Hash</span>
<span class="t m" style="left:1452.3px;top:797.1px;font-size:19.5px;line-height:19.5px;color:#242424;letter-spacing:-0.16px;z-index:10;">JSONPath</span>
<span class="t m" style="left:1452.3px;top:829.6px;font-size:19.5px;line-height:19.5px;color:#242424;letter-spacing:-2.19px;z-index:10;">OS</span>
<span class="t m" style="left:1452.3px;top:862.2px;font-size:19.5px;line-height:19.5px;color:#242424;letter-spacing:0.43px;z-index:10;">Prompt</span>
<span class="t m" style="left:1452.3px;top:894.9px;font-size:19.5px;line-height:19.5px;color:#242424;letter-spacing:0.06px;z-index:10;">Request</span>
<span class="t m" style="left:1452.3px;top:927.5px;font-size:19.5px;line-height:19.5px;color:#242424;letter-spacing:0.03px;z-index:10;">Response</span>
<span class="t m" style="left:1452.3px;top:960.1px;font-size:19.5px;line-height:19.5px;color:#242424;letter-spacing:0.47px;z-index:10;">Timestamp</span>
<span class="t m" style="left:1452.3px;top:992.6px;font-size:19.5px;line-height:19.5px;color:#242424;letter-spacing:-0.56px;z-index:10;">UUID</span>
<span class="t m" style="left:1632.8px;top:8.5px;font-size:20px;line-height:20px;color:#242424;z-index:10;">timestamp</span>
<span class="t m" style="left:1632.8px;top:41.1px;font-size:20px;line-height:20px;color:#242424;z-index:10;">isoTimestamp</span>
<span class="t m" style="left:1632.8px;top:73.7px;font-size:20px;line-height:20px;color:#242424;z-index:10;">randomUUID</span>
<span class="t m" style="left:1632.8px;top:106.3px;font-size:20px;line-height:20px;color:#242424;z-index:10;">randomAlphaNumeric</span>
<span class="t m" style="left:1632.8px;top:138.9px;font-size:20px;line-height:20px;color:#242424;z-index:10;">randomBoolean</span>
<span class="t m" style="left:1632.8px;top:171.5px;font-size:20px;line-height:20px;color:#242424;z-index:10;">randomInt</span>
<span class="t m" style="left:1632.8px;top:204.1px;font-size:20px;line-height:20px;color:#242424;z-index:10;">randomColor</span>
<span class="t m" style="left:1632.8px;top:236.7px;font-size:20px;line-height:20px;color:#242424;z-index:10;">randomHexColor</span>
<span class="t m" style="left:1632.8px;top:269.3px;font-size:20px;line-height:20px;color:#242424;z-index:10;">randomAbbreviation</span>
<span class="t m" style="left:1632.8px;top:301.9px;font-size:20px;line-height:20px;color:#242424;z-index:10;">randomIP</span>
<span class="t m" style="left:1632.8px;top:334.5px;font-size:20px;line-height:20px;color:#242424;z-index:10;">randomIPV6</span>
<span class="t m" style="left:1632.8px;top:367.1px;font-size:20px;line-height:20px;color:#242424;z-index:10;">randomMACAddress</span>
<span class="t m" style="left:1632.8px;top:399.7px;font-size:20px;line-height:20px;color:#242424;z-index:10;">randomPassword</span>
<span class="t m" style="left:1632.8px;top:432.3px;font-size:20px;line-height:20px;color:#242424;z-index:10;">randomLocale</span>
<span class="t m" style="left:1632.8px;top:464.9px;font-size:20px;line-height:20px;color:#242424;z-index:10;">randomUserAgent</span>
<span class="t m" style="left:1632.8px;top:497.5px;font-size:20px;line-height:20px;color:#242424;z-index:10;">randomProtocol</span>
<span class="t m" style="left:1632.8px;top:530.1px;font-size:20px;line-height:20px;color:#242424;z-index:10;">randomSemver</span>
<span class="t m" style="left:1632.8px;top:562.7px;font-size:20px;line-height:20px;color:#242424;z-index:10;">randomFirstName</span>
<span class="t m" style="left:1632.8px;top:595.3px;font-size:20px;line-height:20px;color:#242424;z-index:10;">randomLastName</span>
<span class="t m" style="left:1632.8px;top:627.9px;font-size:20px;line-height:20px;color:#242424;z-index:10;">randomFullName</span>
<span class="t m" style="left:1632.8px;top:660.5px;font-size:20px;line-height:20px;color:#242424;z-index:10;">randomNamePrefix</span>
<span class="t m" style="left:1632.8px;top:693.1px;font-size:20px;line-height:20px;color:#242424;z-index:10;">randomNameSuffix</span>
<span class="t m" style="left:1632.8px;top:725.7px;font-size:20px;line-height:20px;color:#242424;z-index:10;">randomJobArea</span>
<span class="t m" style="left:1632.8px;top:758.3px;font-size:20px;line-height:20px;color:#242424;z-index:10;">randomJobDescriptor</span>
<span class="t m" style="left:1632.8px;top:790.9px;font-size:20px;line-height:20px;color:#242424;z-index:10;">randomJobTitle</span>
<span class="t m" style="left:1632.8px;top:823.5px;font-size:20px;line-height:20px;color:#242424;z-index:10;">randomJobType</span>
<span class="t m" style="left:1632.8px;top:856.1px;font-size:20px;line-height:20px;color:#242424;z-index:10;">randomPhoneNumber</span>
<span class="t m" style="left:1632.8px;top:888.7px;font-size:20px;line-height:20px;color:#242424;z-index:10;">randomPhoneNumberExt</span>
<span class="t m" style="left:1632.8px;top:921.3px;font-size:20px;line-height:20px;color:#242424;z-index:10;">randomCity</span>
<span class="t m" style="left:1632.8px;top:953.9px;font-size:20px;line-height:20px;color:#242424;z-index:10;">randomStreetName</span>
<span class="t m" style="left:1632.8px;top:986.5px;font-size:20px;line-height:20px;color:#242424;z-index:10;">randomStreetAddress</span>
<span class="t m" style="left:1632.8px;top:1019.1px;font-size:20px;line-height:20px;color:#242424;z-index:10;">randomCountry</span>
<span class="t m" style="left:1632.8px;top:1051.7px;font-size:20px;line-height:20px;color:#242424;z-index:10;">randomCountryCode</span>
<span class="t m" style="left:1632.8px;top:1084.3px;font-size:20px;line-height:20px;color:#242424;z-index:10;">randomLatitude</span>
<span class="t m" style="left:1632.8px;top:1116.9px;font-size:20px;line-height:20px;color:#242424;z-index:10;">randomLongitude</span>
<span class="t m" style="left:1632.8px;top:1149.5px;font-size:20px;line-height:20px;color:#242424;z-index:10;">randomAvatarImage</span>
<span class="t m" style="left:1632.8px;top:1182.1px;font-size:20px;line-height:20px;color:#242424;z-index:10;">randomImageUrl</span>
<span class="t m" style="left:1632.8px;top:1214.7px;font-size:20px;line-height:20px;color:#242424;z-index:10;">randomAbstractImage</span>
<span class="t m" style="left:1632.8px;top:1247.3px;font-size:20px;line-height:20px;color:#242424;z-index:10;">randomAnimalsImage</span>
<span class="t m" style="left:1632.8px;top:1279.9px;font-size:20px;line-height:20px;color:#242424;z-index:10;">randomBusinessImage</span>
<span class="t m" style="left:1632.8px;top:1312.5px;font-size:20px;line-height:20px;color:#242424;z-index:10;">randomCatsImage</span>
<span class="t m" style="left:1632.8px;top:1345.1px;font-size:20px;line-height:20px;color:#242424;z-index:10;">randomCityImage</span>
<span class="t m" style="left:1632.8px;top:1377.7px;font-size:20px;line-height:20px;color:#242424;z-index:10;">randomFoodImage</span>
<span class="t m" style="left:1632.8px;top:1410.3px;font-size:20px;line-height:20px;color:#242424;z-index:10;">randomNightlifeImage</span>
<span class="t m" style="left:1632.8px;top:1442.9px;font-size:20px;line-height:20px;color:#242424;z-index:10;">randomFashionImage</span>
<span class="t m" style="left:1632.8px;top:1475.5px;font-size:20px;line-height:20px;color:#242424;z-index:10;">randomPeopleImage</span>

</div></body></html>
